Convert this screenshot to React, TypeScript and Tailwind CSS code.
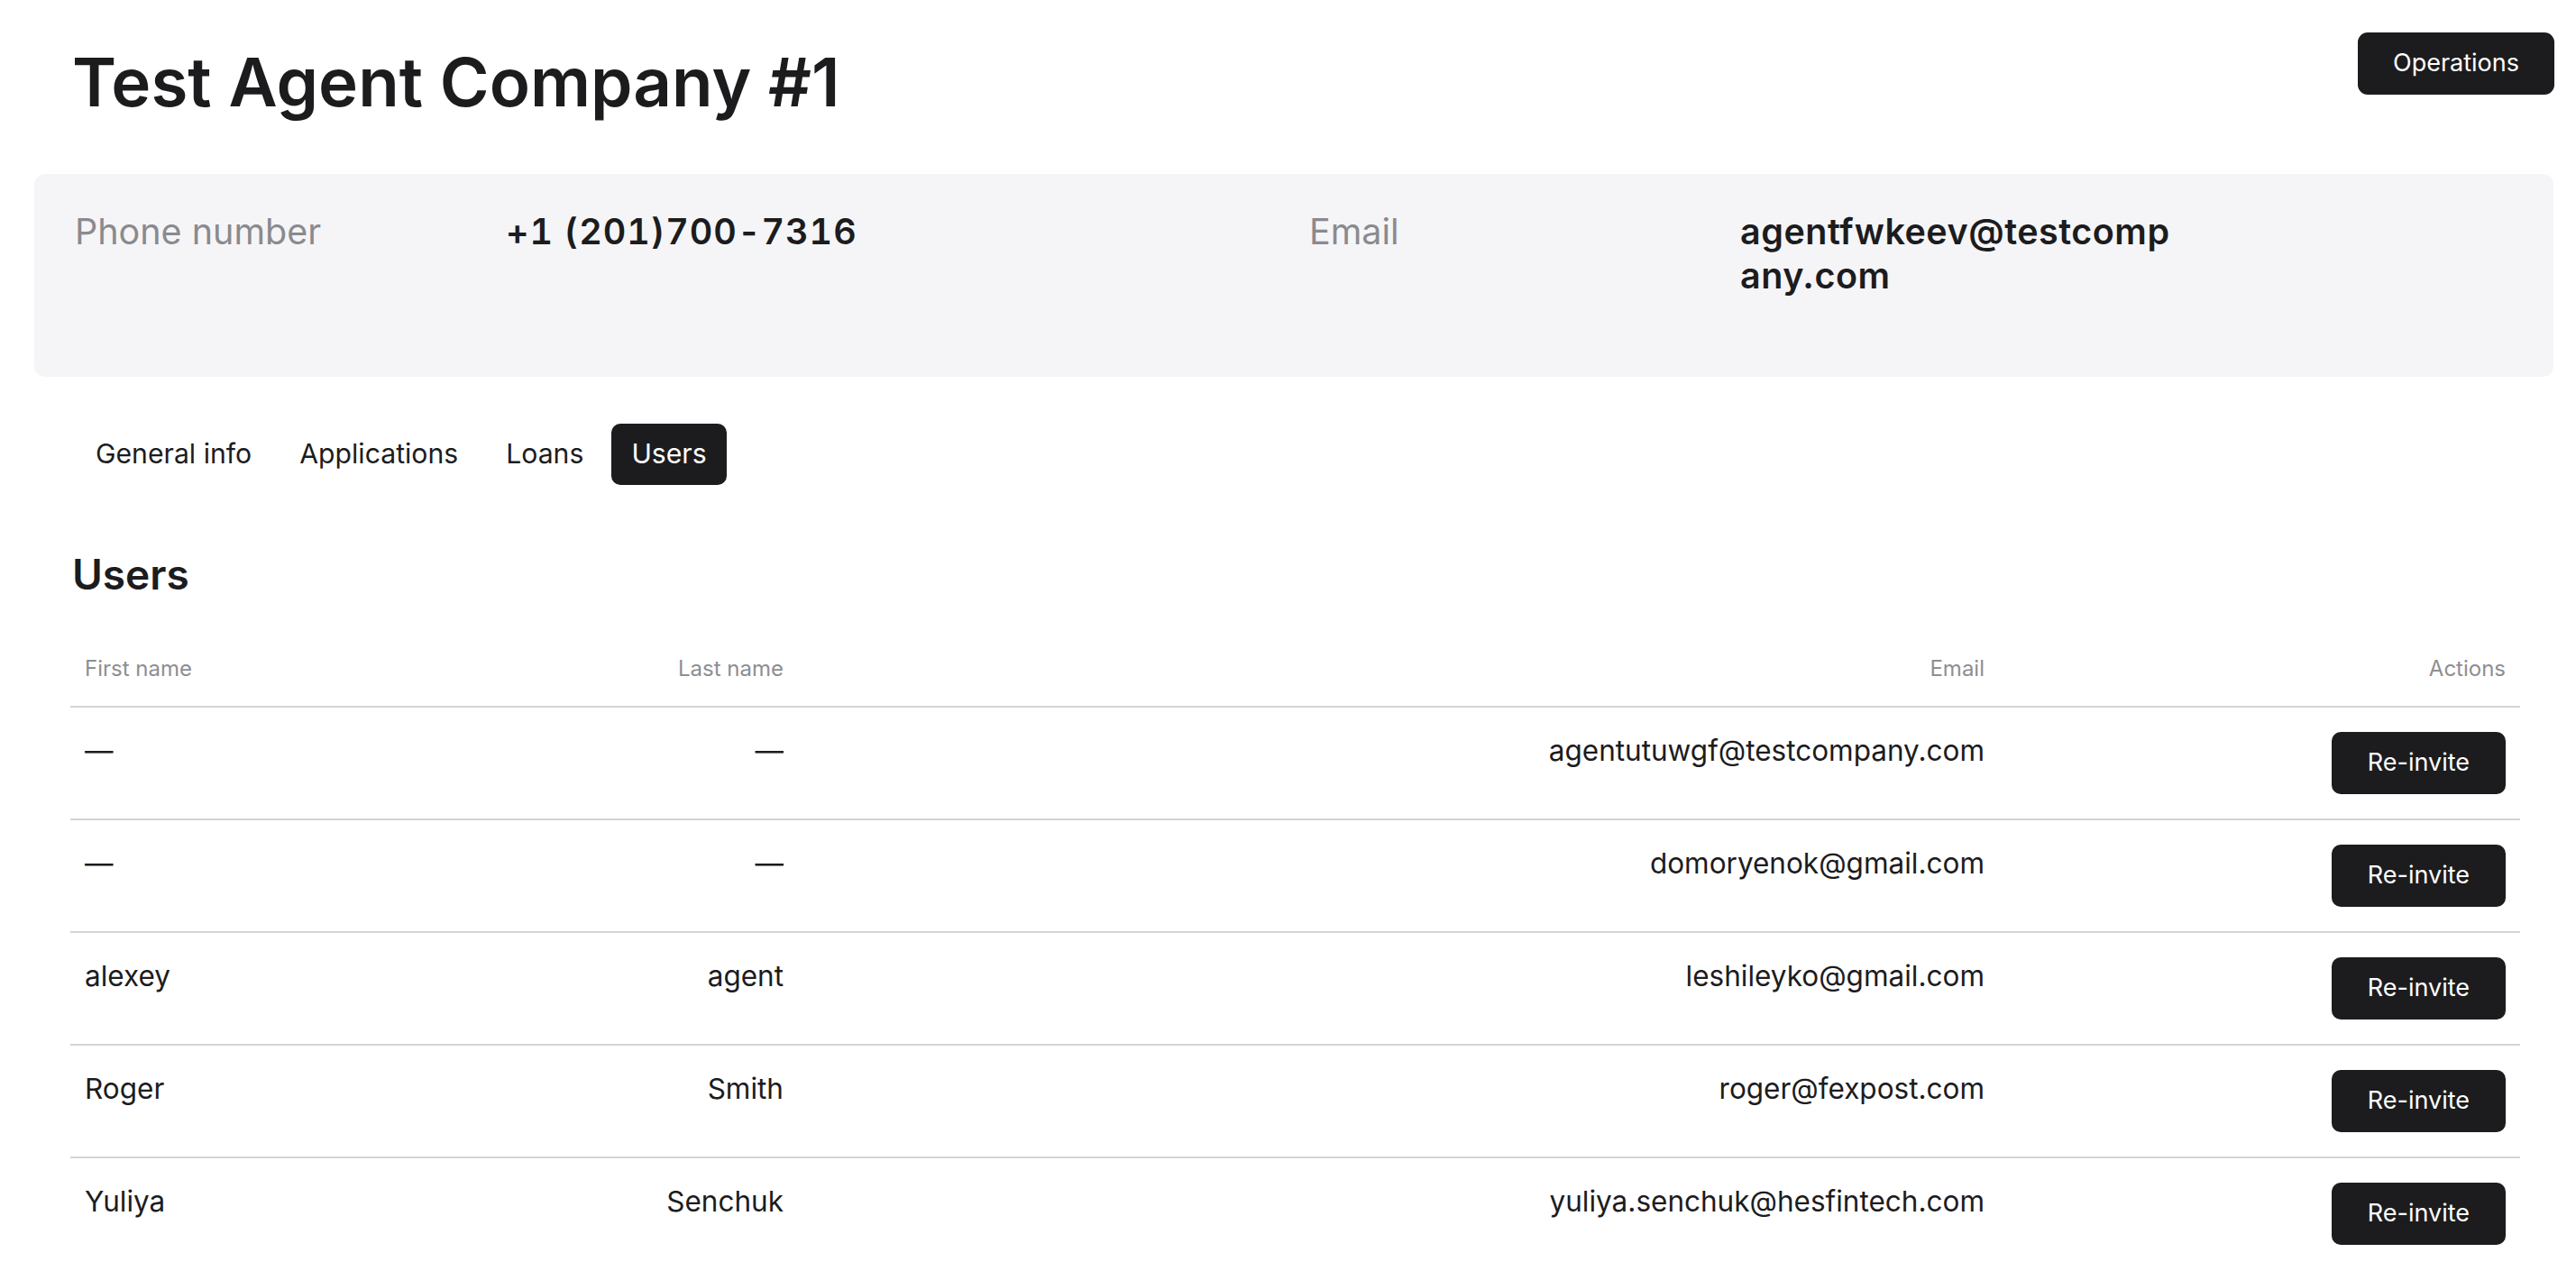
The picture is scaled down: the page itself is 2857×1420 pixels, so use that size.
import React from "react"

const users = [
  { first: "—", last: "—", email: "agentutuwgf@testcompany.com" },
  { first: "—", last: "—", email: "domoryenok@gmail.com" },
  { first: "alexey", last: "agent", email: "leshileyko@gmail.com" },
  { first: "Roger", last: "Smith", email: "roger@fexpost.com" },
  { first: "Yuliya", last: "Senchuk", email: "yuliya.senchuk@hesfintech.com" },
]

const tabs = ["General info", "Applications", "Loans", "Users"]

export default function App() {
  return (
    <div className="min-h-screen bg-white pl-[38px] pr-[25px] text-[#1c1c1e] font-['Inter','Noto_Sans',sans-serif]">
      <div className="flex items-start justify-between">
        <h1 className="ml-[42px] mt-[50px] text-[74.5px] font-semibold leading-[82px]">
          Test Agent Company #1
        </h1>
        <button className="mt-[36px] -mr-[1px] h-[69px] rounded-[11px] bg-[#1c1c1e] px-[39px] text-[27px] text-white">
          Operations
        </button>
      </div>

      <div className="mt-[61px] grid h-[225px] grid-cols-2 gap-x-[34px] rounded-xl bg-[#f5f5f7] px-[45px] pt-[40px]">
        <InfoItem label="Phone number" value="+1 (201)700-7316" phone />
        <InfoItem label="Email" value="agentfwkeev@testcompany.com" />
      </div>

      <div className="mt-[52px] ml-[46px] flex gap-[9px]">
        {tabs.map((t) => (
          <button
            key={t}
            className={
              t === "Users"
                ? "h-[68px] rounded-[10px] bg-[#1c1c1e] px-[22px] text-[30.2px] text-white"
                : "h-[68px] rounded-[10px] px-[22px] text-[30.2px] text-[#1c1c1e]"
            }
          >
            {t}
          </button>
        ))}
      </div>

      <div className="pl-[40px] pr-[37px]">
        <h2 className="mt-[72px] ml-[2px] text-[46px] font-semibold leading-[55px]">Users</h2>
        <table className="mt-[45px] w-full border-collapse">
          <thead>
            <tr className="border-b-2 border-[#d4d4d4] text-[24px] leading-[32px] text-[#8e8e93]">
              <th className="w-[400px] px-[16px] pt-[16px] pb-[25px] text-left font-normal">First name</th>
              <th className="w-[407px] px-[16px] pt-[16px] pb-[25px] text-right font-normal">Last name</th>
              <th className="px-[16px] pt-[16px] pb-[25px] text-right font-normal">Email</th>
              <th className="w-[578px] px-[16px] pt-[16px] pb-[25px] text-right font-normal">Actions</th>
            </tr>
          </thead>
          <tbody>
            {users.map((u, i) => (
              <tr
                key={u.email}
                className={i < users.length - 1 ? "border-b-2 border-[#d4d4d4]" : ""}
              >
                <td className="px-[16px] py-[27px] align-top text-[31.5px] leading-[42px]">{u.first}</td>
                <td className="px-[16px] py-[27px] align-top text-right text-[31.5px] leading-[42px]">{u.last}</td>
                <td className="px-[16px] py-[27px] align-top text-right text-[31.5px] leading-[42px]">{u.email}</td>
                <td className="px-[16px] py-[27px] text-right align-middle">
                  <button className="h-[69px] rounded-[10px] bg-[#1c1c1e] px-[40px] text-[27px] text-white">
                    Re-invite
                  </button>
                </td>
              </tr>
            ))}
          </tbody>
        </table>
      </div>
    </div>
  )
}

function InfoItem({ label, value, phone }: { label: string; value: string; phone?: boolean }) {
  return (
    <div className="flex items-start text-[39.5px] leading-[49px]">
      <div className="w-[478px] shrink-0 text-[#8a8a8e]">{label}</div>
      <div
        className={
          phone
            ? "w-[480px] break-all font-semibold tracking-[1px] tabular-nums"
            : "w-[480px] break-all font-semibold tracking-[0.5px]"
        }
      >
        {value}
      </div>
    </div>
  )
}
